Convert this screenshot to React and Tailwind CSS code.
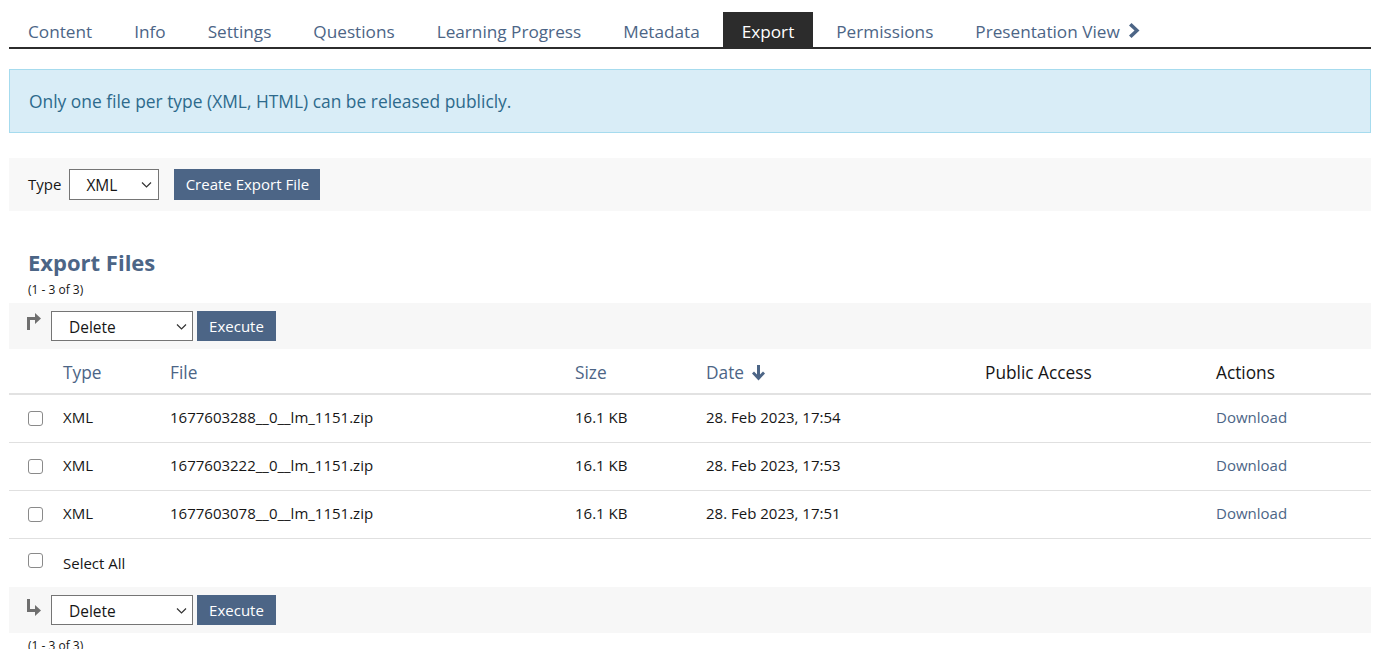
import React from "react";

const tabs = [
  "Content",
  "Info",
  "Settings",
  "Questions",
  "Learning Progress",
  "Metadata",
  "Export",
  "Permissions",
];

const files = [
  { name: "1677603288__0__lm_1151.zip", date: "28. Feb 2023, 17:54" },
  { name: "1677603222__0__lm_1151.zip", date: "28. Feb 2023, 17:53" },
  { name: "1677603078__0__lm_1151.zip", date: "28. Feb 2023, 17:51" },
];

const cols = "grid grid-cols-[45px_107px_405px_131px_279px_231px_1fr]";

function Chevron() {
  return (
    <svg width="11" height="9" viewBox="0 0 11 9" fill="none" stroke="#333" strokeWidth="1.2">
      <path d="M1 2.5 L5.5 7 L10 2.5" />
    </svg>
  );
}

function FakeSelect({ value, className }) {
  return (
    <div
      className={`flex items-center justify-between bg-white border border-[#757575] text-[15.5px] text-[#161616] ${className}`}
    >
      <span className="mt-[3px]">{value}</span>
      <Chevron />
    </div>
  );
}

function Checkbox() {
  return (
    <span className="block w-[15px] h-[15px] border border-[#8a8a8a] rounded-[3px] bg-white" />
  );
}

function Toolbar({ bottom }) {
  return (
    <div className="flex items-center h-[46px] bg-[#f7f7f7] pl-[17px]">
      <svg width="16" height="18" viewBox="0 0 16 18" fill="#6f6f6f" className={bottom ? "mt-[-4px]" : "mt-[-10px]"}>
        {bottom ? (
          <path d="M1 0 H4 V10 H9 V6 L15 11.5 L9 17 V13 H1 Z" />
        ) : (
          <path d="M1 18 V5 H9 V1 L15 6.5 L9 12 V8 H4 V18 Z" />
        )}
      </svg>
      <FakeSelect value="Delete" className="ml-[9px] w-[142px] h-[30px] pl-[17px] pr-[5px]" />
      <button className="ml-[4px] w-[79px] h-[30px] bg-[#4c6586] text-white text-[15px]">
        Execute
      </button>
    </div>
  );
}

export default function App() {
  return (
    <div
      className="bg-white min-h-screen text-[#161616]"
      style={{ fontFamily: '"Open Sans", "Liberation Sans", sans-serif' }}
    >
      <div className="ml-[9px] w-[1362px] pt-[12px]">
        {/* tabs */}
        <div className="flex gap-[4px] border-b-2 border-[#2c2c2c] h-[37px]">
          {tabs.map((t) => (
            <div
              key={t}
              className={`px-[19px] h-[35px] flex items-center text-[17.2px] ${
                t === "Export" ? "bg-[#2c2c2c] text-white" : "text-[#4c6586]"
              }`}
            >
              <span className="mt-[4px]">{t}</span>
            </div>
          ))}
          <div className="px-[19px] h-[35px] flex items-center text-[17.2px] text-[#4c6586]">
            <span className="mt-[4px]">Presentation View</span>
            <svg width="11" height="15" viewBox="0 0 11 15" fill="#4c6586" className="ml-[9px] mt-[2px]">
              <path d="M2.5 0 L10.5 7.5 L2.5 15 L0 12.5 L5.5 7.5 L0 2.5 Z" />
            </svg>
          </div>
        </div>

        {/* info */}
        <div className="mt-[20px] h-[64px] bg-[#d9edf7] border border-[#a6dbee] flex items-center pl-[19px] text-[17.4px] text-[#2d6a8c]">
          Only one file per type (XML, HTML) can be released publicly.
        </div>

        {/* create form */}
        <div className="mt-[25px] h-[53px] bg-[#f8f8f8] flex items-center pl-[19px]">
          <span className="text-[15px] mr-[8px]">Type</span>
          <FakeSelect value="XML" className="w-[90px] h-[31px] pl-[16px] pr-[6px]" />
          <button className="ml-[15px] w-[146px] h-[31px] bg-[#4c6586] text-white text-[15px]">
            Create Export File
          </button>
        </div>

        {/* heading */}
        <h2 className="mt-[36px] pl-[19px] text-[22px] font-bold leading-[30px] text-[#4c6586]">
          Export Files
        </h2>
        <div className="pl-[19px] text-[12px] leading-[16px] mt-[5px] mb-[5px]">(1 - 3 of 3)</div>

        <Toolbar />

        {/* table header */}
        <div className={`${cols} h-[46px] items-center pt-[3px] text-[17.3px] border-b-2 border-[#e2e2e2]`}>
          <div />
          <div className="pl-[9px] text-[#4c6586]">Type</div>
          <div className="pl-[9px] text-[#4c6586]">File</div>
          <div className="pl-[9px] text-[#4c6586]">Size</div>
          <div className="pl-[9px] text-[#4c6586] flex items-center">
            Date
            <svg width="13" height="16" viewBox="0 0 13 16" fill="#4c6586" className="ml-[8px]">
              <path d="M5 0 H8 V9.5 L11 6.5 L13 8.5 L6.5 15.5 L0 8.5 L2 6.5 L5 9.5 Z" />
            </svg>
          </div>
          <div className="pl-[9px]">Public Access</div>
          <div className="pl-[9px]">Actions</div>
        </div>

        {/* rows */}
        {files.map((f) => (
          <div key={f.name} className={`${cols} h-[48px] items-center pb-[2px] text-[15px] border-b border-[#e0e0e0]`}>
            <div className="pl-[19px] pt-[2px]">
              <Checkbox />
            </div>
            <div className="pl-[9px]">XML</div>
            <div className="pl-[9px]">{f.name}</div>
            <div className="pl-[9px]">16.1 KB</div>
            <div className="pl-[9px]">{f.date}</div>
            <div />
            <div className="pl-[9px] text-[#4c6586]">Download</div>
          </div>
        ))}

        {/* select all */}
        <div className="flex items-center h-[48px] text-[15px]">
          <div className="pl-[19px] w-[54px] mb-[5px]">
            <Checkbox />
          </div>
          <span>Select All</span>
        </div>

        <Toolbar bottom />
        <div className="pl-[19px] text-[12px] leading-[16px] mt-[5px]">(1 - 3 of 3)</div>
      </div>
    </div>
  );
}
